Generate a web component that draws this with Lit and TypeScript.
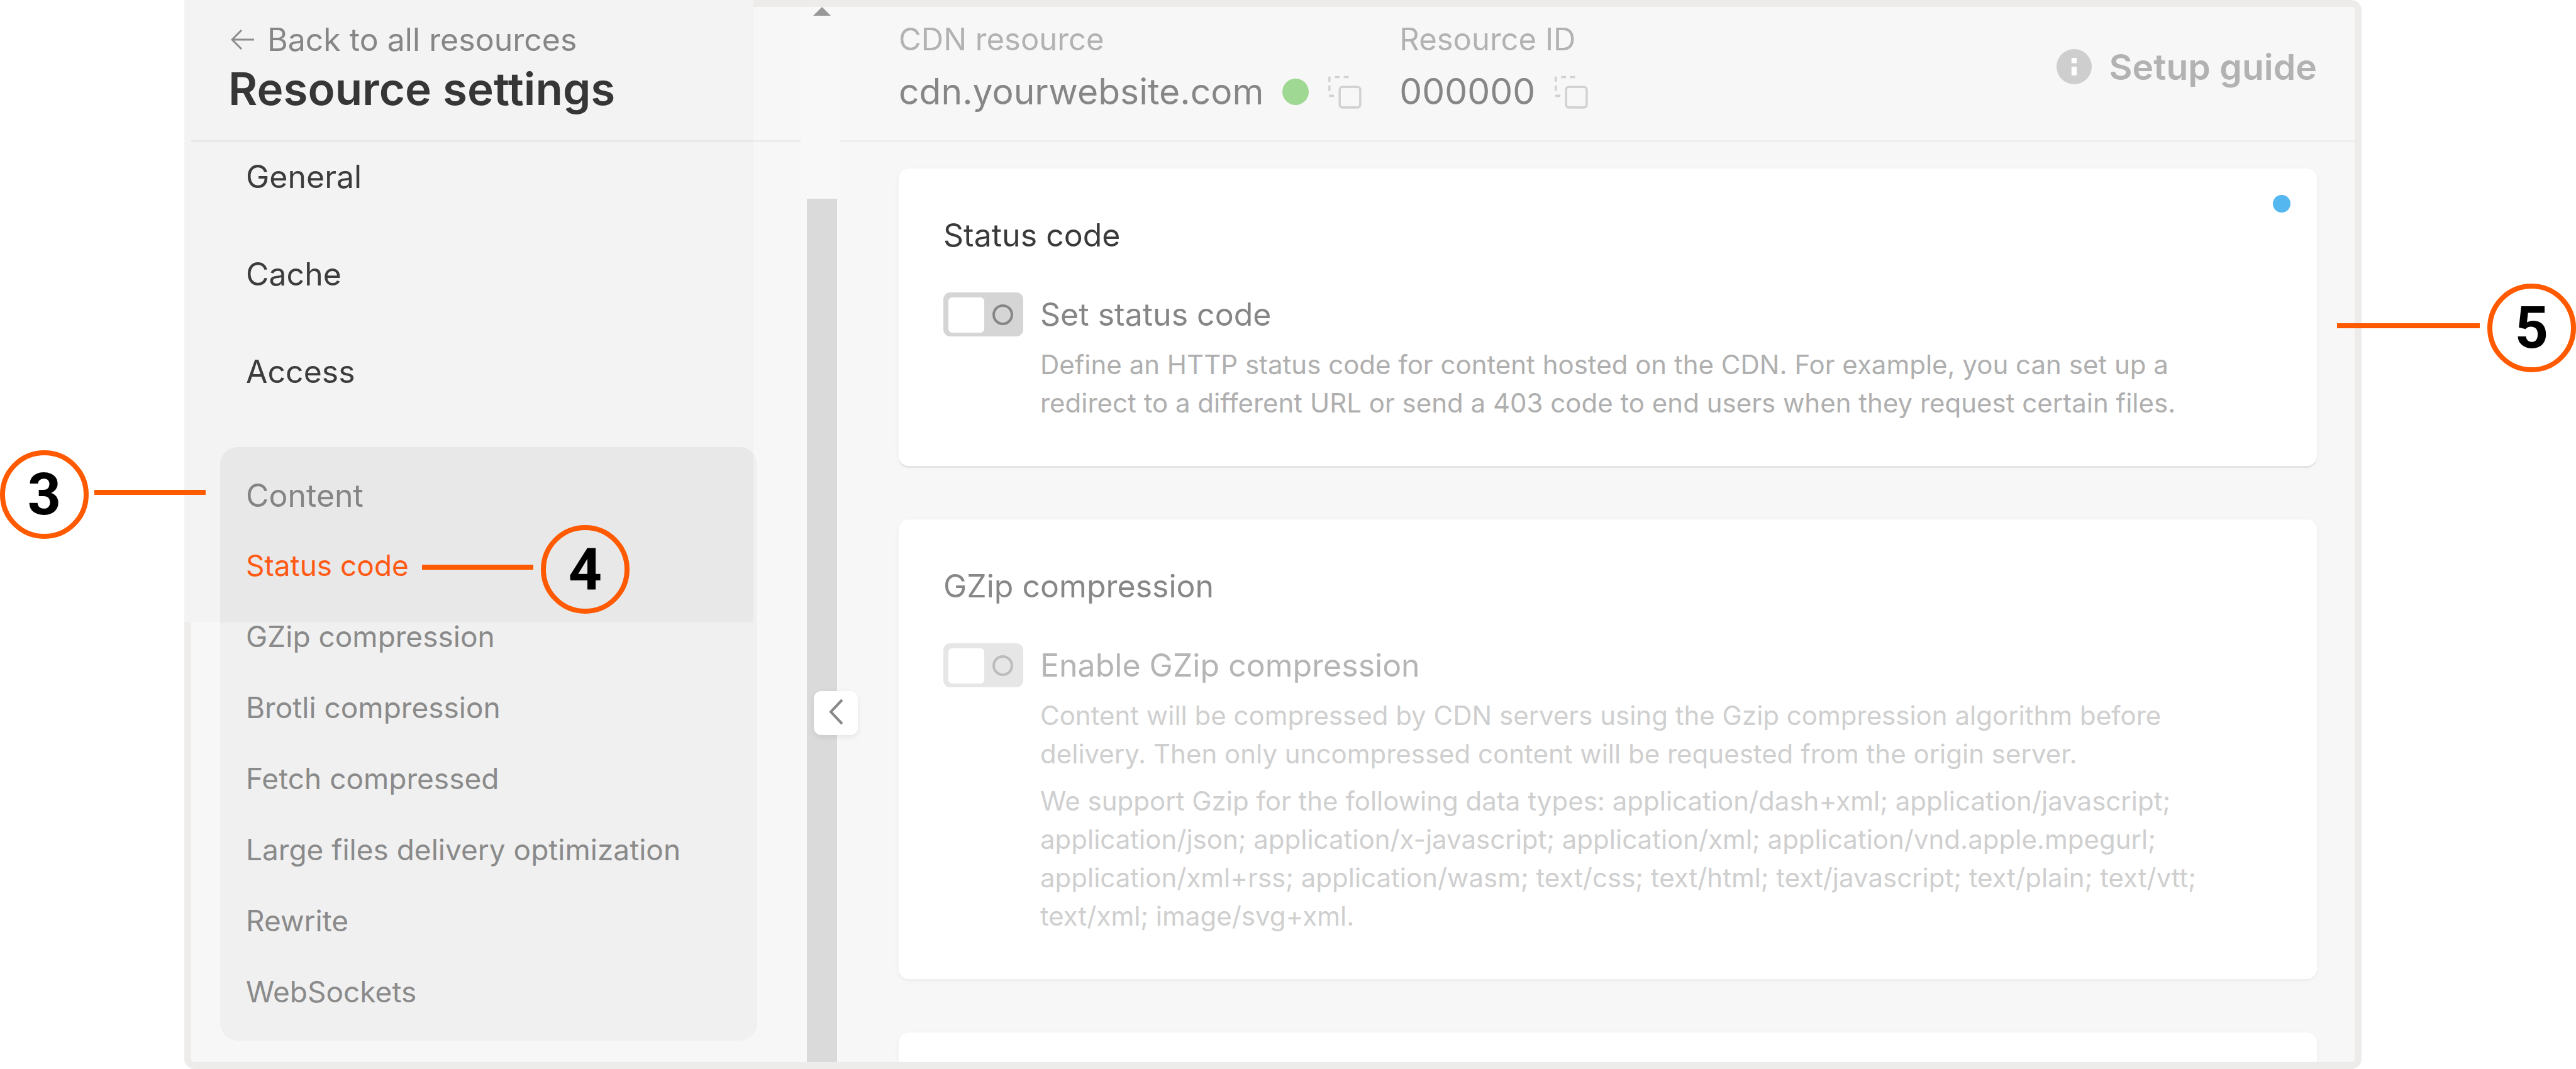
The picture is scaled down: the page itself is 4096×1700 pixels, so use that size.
import { LitElement, html, css, svg, nothing } from "lit";
import { customElement, property } from "lit/decorators.js";

const sections = ["General", "Cache", "Access"];
const contentItems = [
  "Status code",
  "GZip compression",
  "Brotli compression",
  "Fetch compressed",
  "Large files delivery optimization",
  "Rewrite",
  "WebSockets",
];

const copyIcon = svg`
  <g fill="none" stroke="#d2d2d2" stroke-width="5">
    <path d="M4 4v12M4 24v12M3 47h11M16 5h11M36 5h11" />
    <rect x="27" y="27" width="46" height="46" rx="6" />
  </g>`;

/** Numbered marker with a leader line. */
@customElement("call-out")
export class CallOut extends LitElement {
  @property({ type: Number }) number = 0;
  @property() side: "before" | "after" = "before";

  static styles = css`
    :host {
      display: flex;
      align-items: center;
      gap: 12px;
    }
    .line {
      flex: 1;
      height: 8px;
      margin-bottom: 8px;
      background: #ff5a00;
    }
    .circle {
      box-sizing: border-box;
      width: 141px;
      height: 141px;
      border: 8px solid #ff5a00;
      border-radius: 50%;
      color: #000;
      font: 700 93px/125px Roboto, sans-serif;
      text-align: center;
    }
  `;

  render() {
    const line = html`<span class="line"></span>`;
    return html`
      ${this.side === "before" ? line : nothing}
      <span class="circle">${this.number}</span>
      ${this.side === "after" ? line : nothing}
    `;
  }
}

/** Card with a heading, one switch and its description paragraphs. */
@customElement("setting-card")
export class SettingCard extends LitElement {
  @property() heading = "";
  @property() label = "";
  @property({ attribute: false }) notes: string[] = [];
  @property({ type: Boolean, reflect: true }) muted = false;
  @property({ type: Boolean }) marked = false;

  static styles = css`
    :host {
      --title: #3a3a3a;
      --label: #858585;
      --note: #afafaf;
      --track: #d5d5d5;
      --ring: #868686;
      --edge: #e4e4e4;
      position: relative;
      display: block;
      padding: 71px 71px 70px;
      border-radius: 16px;
      background: #fff;
      box-shadow: 0 3px 0 var(--edge), 0 2px 12px rgba(0, 0, 0, 0.03);
    }
    :host([muted]) {
      --title: #878787;
      --label: #b5b5b5;
      --note: #cfcfcf;
      --track: #e6e6e6;
      --ring: #bcbcbc;
      --edge: #efefef;
    }
    h2 {
      margin: 0 0 56px;
      color: var(--title);
      font-size: 50px;
      font-weight: 400;
      line-height: 70px;
    }
    .row {
      display: grid;
      grid-template-columns: 127px 1fr;
      column-gap: 27px;
      row-gap: 14px;
    }
    label {
      color: var(--label);
      font-size: 50px;
      line-height: 70px;
    }
    .switch {
      appearance: none;
      position: relative;
      box-sizing: border-box;
      width: 127px;
      height: 70px;
      margin: 0;
      border-radius: 11px;
      background: var(--track);
    }
    .switch::before {
      content: "";
      position: absolute;
      top: 8px;
      left: 8px;
      width: 57px;
      height: 56px;
      border-radius: 6px;
      background: #fff;
    }
    .switch::after {
      content: "";
      position: absolute;
      top: 19px;
      right: 16px;
      box-sizing: border-box;
      width: 33px;
      height: 33px;
      border: 4px solid var(--ring);
      border-radius: 50%;
    }
    p {
      grid-column: 2;
      margin: 0;
      padding-right: 40px;
      color: var(--note);
      font-size: 42px;
      line-height: 61px;
    }
    .mark {
      position: absolute;
      top: 42px;
      right: 42px;
      width: 28px;
      height: 28px;
      border-radius: 50%;
      background: #55b7f0;
    }
  `;

  render() {
    return html`
      ${this.marked ? html`<span class="mark"></span>` : nothing}
      ${this.heading
        ? html`<h2>${this.heading}</h2>
            <div class="row">
              <input class="switch" type="checkbox" id="switch" />
              <label for="switch">${this.label}</label>
              ${this.notes.map((note) => html`<p>${note}</p>`)}
            </div>`
        : nothing}
    `;
  }
}

@customElement("app-root")
export class AppRoot extends LitElement {
  static styles = css`
    :host {
      display: block;
      font-family: Inter, "Liberation Sans", sans-serif;
    }
    .stage {
      position: relative;
      display: flex;
      box-sizing: border-box;
      height: 100vh;
      padding: 0 341px 0 293px;
      background: #fff;
      overflow: hidden;
    }
    .frame {
      position: relative;
      flex: 1;
      display: grid;
      grid-template-columns: 969px 63px minmax(0, 1fr);
      grid-template-rows: minmax(0, 1fr);
      border: 11px solid #eeecea;
      border-radius: 16px;
      background: #f7f7f7;
    }
    .spotlight {
      position: absolute;
      top: -11px;
      left: -11px;
      width: 905px;
      height: 989px;
      background: #f3f3f3;
    }
    .sidebar,
    .scroll,
    .main {
      position: relative;
    }
    .sidebar,
    .main {
      overflow: hidden;
    }
    a {
      color: inherit;
      text-decoration: none;
    }
    button {
      padding: 0;
      border: 0;
      background: none;
      font: inherit;
      color: inherit;
    }
    svg {
      display: block;
    }
    .side-head {
      padding: 22px 59px 34px;
      border-bottom: 3px solid rgba(0, 0, 0, 0.045);
    }
    .back {
      display: flex;
      align-items: center;
      gap: 20px;
      padding-left: 4px;
      color: #868686;
      font-size: 50px;
      line-height: 60px;
    }
    h1 {
      margin: 0;
      color: #363636;
      font-size: 71px;
      font-weight: 600;
      line-height: 96px;
    }
    .nav {
      display: flex;
      flex-direction: column;
      gap: 45px;
      padding: 0 69px 0 46px;
    }
    .section {
      padding-left: 41px;
      color: #3c3c3c;
      font-size: 50px;
      line-height: 110px;
    }
    .group {
      margin-top: 20px;
      padding: 22px 0 21px;
      border-radius: 28px;
      background: linear-gradient(#e8e8e8, #e8e8e8) 0 0 / 848px 279px no-repeat
        #f0f0f0;
    }
    .group .section {
      display: block;
      color: #848484;
    }
    ul {
      margin: 0;
      padding: 0;
      list-style: none;
    }
    li {
      position: relative;
      padding-left: 41px;
      color: #8a8a8a;
      font-size: 46px;
      line-height: 113px;
    }
    .current {
      color: #ff5a14;
    }
    .scroll {
      display: flex;
      flex-direction: column;
      align-items: center;
      padding: 0 5px 0 10px;
      background: #f8f8f8;
      z-index: 1;
    }
    .thumb {
      flex: 1;
      align-self: stretch;
      margin-top: 291px;
      background: #dadada;
    }
    .collapse {
      position: absolute;
      top: 1088px;
      left: 21px;
      width: 70px;
      height: 70px;
      border-radius: 12px;
      background: #fff;
      box-shadow: 0 3px 10px rgba(0, 0, 0, 0.08);
    }
    .head {
      display: flex;
      align-items: center;
      gap: 60px;
      padding: 22px 60px 24px 93px;
      border-bottom: 3px solid rgba(0, 0, 0, 0.035);
    }
    .label {
      color: #b2b2b2;
      font-size: 49px;
      line-height: 60px;
    }
    .value {
      display: flex;
      align-items: center;
      gap: 30px;
      color: #868686;
      font-size: 57px;
      line-height: 106px;
    }
    .online {
      width: 42px;
      height: 42px;
      border-radius: 50%;
      background: #9fd892;
    }
    .guide {
      display: flex;
      align-items: center;
      gap: 28px;
      margin: 0 0 20px auto;
      color: #b2b2b2;
      font-size: 57px;
      font-weight: 600;
    }
    .cards {
      display: flex;
      flex-direction: column;
      gap: 85px;
      padding: 42px 60px 0 93px;
    }
    .content-mark {
      position: absolute;
      top: 716px;
      left: 0;
      width: 327px;
      gap: 9px;
    }
    .item-mark {
      position: absolute;
      top: -8px;
      left: 321px;
      width: 330px;
    }
    .card-mark {
      position: absolute;
      top: 451px;
      right: 0;
      width: 380px;
    }
  `;

  render() {
    return html`
      <div class="stage">
        <div class="frame">
          <div class="spotlight"></div>
          <aside class="sidebar">
            <header class="side-head">
              <a class="back" href="#resources">
                <svg width="38" height="32" viewBox="0 0 38 32" fill="none" stroke="#8c8c8c" stroke-width="3">
                  <path d="M37 16H2M17 1L2 16l15 15" />
                </svg>
                Back to all resources
              </a>
              <h1>Resource settings</h1>
            </header>
            <nav class="nav">
              ${sections.map(
                (name) => html`<a class="section" href="#${name.toLowerCase()}">${name}</a>`
              )}
              <div class="group">
                <a class="section" href="#content">Content</a>
                <ul>
                  ${contentItems.map(
                    (name, i) => html`<li>
                      <a class=${i === 0 ? "current" : ""} href="#item-${i}">${name}</a>
                      ${i === 0
                        ? html`<call-out class="item-mark" side="before" .number=${4}></call-out>`
                        : nothing}
                    </li>`
                  )}
                </ul>
              </div>
            </nav>
          </aside>
          <div class="scroll">
            <svg width="28" height="14" viewBox="0 0 28 14" fill="#989898">
              <path d="M14 0L28 14H0z" />
            </svg>
            <div class="thumb"></div>
            <button class="collapse" aria-label="Collapse menu">
              <svg width="70" height="70" viewBox="0 0 70 70" fill="none" stroke="#888" stroke-width="4">
                <path d="M45 14L27 33l18 19" />
              </svg>
            </button>
          </div>
          <main class="main">
            <header class="head">
              <div>
                <div class="label">CDN resource</div>
                <div class="value">
                  cdn.yourwebsite.com
                  <span class="online"></span>
                  <button aria-label="Copy resource name">
                    <svg width="54" height="54" viewBox="0 0 76 76">${copyIcon}</svg>
                  </button>
                </div>
              </div>
              <div>
                <div class="label">Resource ID</div>
                <div class="value">
                  000000
                  <button aria-label="Copy resource ID">
                    <svg width="54" height="54" viewBox="0 0 76 76">${copyIcon}</svg>
                  </button>
                </div>
              </div>
              <a class="guide" href="#guide">
                <svg width="56" height="56" viewBox="0 0 80 80">
                  <circle cx="40" cy="40" r="40" fill="#cecece" />
                  <path d="M34 20h12v12H34zM34 40h12v20H34z" fill="#fff" />
                </svg>
                Setup guide
              </a>
            </header>
            <div class="cards">
              <setting-card
                marked
                heading="Status code"
                label="Set status code"
                .notes=${[
                  "Define an HTTP status code for content hosted on the CDN. For example, you can set up a redirect to a different URL or send a 403 code to end users when they request certain files.",
                ]}
              ></setting-card>
              <setting-card
                muted
                heading="GZip compression"
                label="Enable GZip compression"
                .notes=${[
                  "Content will be compressed by CDN servers using the Gzip compression algorithm before delivery. Then only uncompressed content will be requested from the origin server.",
                  "We support Gzip for the following data types: application/dash+xml; application/javascript; application/json; application/x-javascript; application/xml; application/vnd.apple.mpegurl; application/xml+rss; application/wasm; text/css; text/html; text/javascript; text/plain; text/vtt; text/xml; image/svg+xml.",
                ]}
              ></setting-card>
              <setting-card muted></setting-card>
            </div>
          </main>
        </div>
        <call-out class="content-mark" side="after" .number=${3}></call-out>
        <call-out class="card-mark" side="before" .number=${5}></call-out>
      </div>
    `;
  }
}
